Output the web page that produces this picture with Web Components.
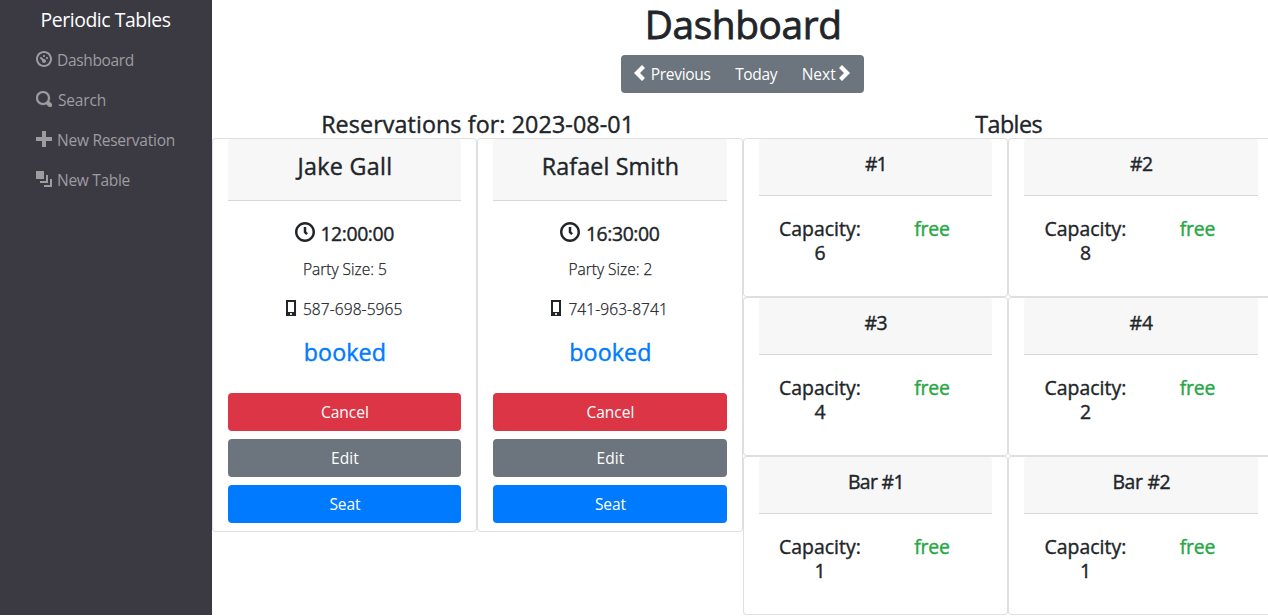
<!DOCTYPE html>
<html lang="en">
<head>
<meta charset="utf-8">
<title>Periodic Tables</title>
<style>
  html, body { margin: 0; height: 100%; overflow: hidden; background: #fff; }
  body { font: 400 16px/24px "Open Sans", "Noto Sans", sans-serif; color: #212529; }
</style>
</head>
<body>
<periodic-app></periodic-app>
<script>
const define = (name, css, html, setup) => customElements.define(name, class extends HTMLElement {
  connectedCallback() {
    if (this.shadowRoot) return;
    const root = this.attachShadow({ mode: "open" });
    root.innerHTML = `<style>*{box-sizing:border-box}${css}</style>${typeof html === "function" ? html(this) : html}`;
    if (setup) setup(this, root);
  }
});
const attr = (el, n) => el.getAttribute(n) || "";

const ICONS = {
  dashboard: "M4 0c-2.2 0-4 1.8-4 4s1.8 4 4 4 4-1.8 4-4-1.8-4-4-4zm0 1c1.66 0 3 1.34 3 3s-1.34 3-3 3-3-1.34-3-3 1.34-3 3-3zm0 1c-.28 0-.5.22-.5.5s.22.5.5.5.5-.22.5-.5-.22-.5-.5-.5zm-1.66 1a.5.5 0 0 0-.19.84l.91.91c-.02.08-.06.16-.06.25 0 .55.45 1 1 1s1-.45 1-1-.45-1-1-1c-.09 0-.17.04-.25.06l-.91-.91a.5.5 0 0 0-.44-.16.5.5 0 0 0-.06 0zm3.16 0c-.28 0-.5.22-.5.5s.22.5.5.5.5-.22.5-.5-.22-.5-.5-.5z",
  search: "M3.5 0c-1.93 0-3.5 1.57-3.5 3.5s1.57 3.5 3.5 3.5c.59 0 1.17-.14 1.66-.41a1 1 0 0 0 .13.13l1 1a1.02 1.02 0 1 0 1.44-1.44l-1-1a1 1 0 0 0-.16-.13c.27-.49.44-1.06.44-1.66 0-1.93-1.55-3.5-3.5-3.5zm0 1c1.39 0 2.5 1.11 2.5 2.5 0 .66-.24 1.27-.66 1.72-.01.01-.02.02-.03.03a1 1 0 0 0-.13.13c-.44.4-1.04.63-1.69.63-1.39 0-2.5-1.11-2.5-2.5s1.11-2.5 2.5-2.5z",
  plus: "M3 0v3h-3v2h3v3h2v-3h3v-2h-3v-3h-2z",
  layers: "M0 0v4h4v-4h-4zm5 2v3h-3v1h4v-4h-1zm2 2v3h-3v1h4v-4h-1z",
  left: "M5 0l-4 4 4 4 1.5-1.5-2.5-2.5 2.5-2.5-1.5-1.5z",
  right: "M2.5 0l-1.5 1.5 2.5 2.5-2.5 2.5 1.5 1.5 4-4-4-4z",
  clock: "M4 0c-2.2 0-4 1.8-4 4s1.8 4 4 4 4-1.8 4-4-1.8-4-4-4zm0 1c1.66 0 3 1.34 3 3s-1.34 3-3 3-3-1.34-3-3 1.34-3 3-3zm-.5 1v2.22l.16.13.5.5.34.38.72-.72-.38-.34-.34-.34v-1.81h-1z",
  phone: "M1.19 0c-.11 0-.19.08-.19.19v7.63c0 .11.08.19.19.19h4.63c.11 0 .19-.08.19-.19v-7.63c0-.11-.08-.19-.19-.19h-4.63zm.81 1h3v5h-3v-5zm1.5 5.5c.28 0 .5.22.5.5s-.22.5-.5.5-.5-.22-.5-.5.22-.5.5-.5z"
};
define("ui-icon", `:host{display:block;flex:none;width:16px;height:16px} svg{display:block;width:100%;height:100%;fill:currentColor}`,
  el => `<svg viewBox="0 0 8 8"><path d="${ICONS[attr(el, "name")]}"/></svg>`);

/* A single line of text tracked so that its advance equals the w attribute. */
define("ui-text", `:host{display:block;flex:none;white-space:nowrap;padding-left:1px} span{display:inline-block;font-size:.97em;vertical-align:top}`,
  `<span><slot></slot></span>`,
  (el, root) => {
    const w = parseFloat(attr(el, "w")), span = root.querySelector("span");
    if (!w) return;
    const n = el.textContent.length, natural = span.getBoundingClientRect().width;
    span.style.letterSpacing = (w - natural) / n + "px";
  });

define("nav-item", `:host{display:flex;align-items:center;height:40px;padding-left:36px;color:#9d9ca1} ui-icon{margin:-2px 4px 0 0} ui-icon[name=search]{stroke:currentColor;stroke-width:.15}`,
  el => `<ui-icon name="${attr(el, "icon")}"></ui-icon><ui-text w="${attr(el, "w")}" style="margin-left:${attr(el, "gap") || 0}px">${attr(el, "label")}</ui-text>`);

define("side-bar", `:host{display:block;height:615px;background:#3b3a43}
  .brand{display:flex;height:40px;align-items:center;padding-left:39.5px;font-size:20px;color:#fff}`,
  `<div class="brand"><ui-text w="130">Periodic Tables</ui-text></div>
   <nav-item icon="dashboard" w="77" label="Dashboard"></nav-item>
   <nav-item icon="search" w="48" gap="1" label="Search"></nav-item>
   <nav-item icon="plus" w="118" label="New Reservation"></nav-item>
   <nav-item icon="layers" w="73" label="New Table"></nav-item>`);

define("day-switch", `:host{display:flex;align-items:center;width:243px;height:38px;margin:0 auto;padding-left:11px;border-radius:4px;background:#6c757d;color:#fff}
  ui-icon{margin-top:-2px}`,
  `<ui-icon name="left"></ui-icon><ui-text w="60" style="margin-left:1.5px">Previous</ui-text>
   <ui-text w="42" style="margin-left:23.5px">Today</ui-text>
   <ui-text w="34" style="margin-left:23.5px">Next</ui-text><ui-icon name="right" style="margin-left:1.5px"></ui-icon>`);

define("action-button", `:host{display:flex;justify-content:center;align-items:center;height:38px;border-radius:4px;color:#fff;margin-bottom:8px}`, `<slot></slot>`);

const CARD = `:host{display:block;min-width:0;border:1px solid rgba(0,0,0,.125);border-radius:4px;padding:0 15px;background:#fff}
  header{display:flex;justify-content:center;padding-top:13px;background:#f7f7f7;border-bottom:1px solid #d8d8d8;border-radius:3px 3px 0 0;font-weight:500;-webkit-text-stroke:.4px currentColor}
  .row{display:flex;justify-content:center}`;

define("reservation-card", CARD + `:host{height:394px}
  header{height:62px;font-size:24px;line-height:29px}
  .time{margin-top:20px;align-items:center;height:24px;font-size:20px;line-height:24px;font-weight:500}
  .time ui-icon{width:20px;height:20px;margin:-2px 4.5px 0 0}
  .time ui-text{padding-top:1px;-webkit-text-stroke:.4px currentColor}
  .party{margin-top:12px;font-weight:300;-webkit-text-stroke:.25px currentColor}
  .phone{margin-top:16px;font-weight:300;align-items:center;-webkit-text-stroke:.25px currentColor}
  .phone ui-icon{margin:-2px 2px 0 -2.5px}
  .status{margin:17px 0 26px;font-size:24px;line-height:29px;font-weight:500;color:#007bff;-webkit-text-stroke:.4px currentColor}`,
  el => `<header><ui-text w="${attr(el, "namew")}">${attr(el, "name")}</ui-text></header>
    <div class="row time"><ui-icon name="clock"></ui-icon><ui-text w="73.5">${attr(el, "time")}</ui-text></div>
    <div class="row party"><ui-text w="84">Party Size: ${attr(el, "party")}</ui-text></div>
    <div class="row phone"><ui-icon name="phone"></ui-icon><ui-text w="99.5">${attr(el, "phone")}</ui-text></div>
    <div class="row status"><ui-text w="82.5">booked</ui-text></div>
    <action-button style="background:#dc3545"><ui-text w="48">Cancel</ui-text></action-button>
    <action-button style="background:#6c757d"><ui-text w="28">Edit</ui-text></action-button>
    <action-button style="background:#007bff"><ui-text w="31">Seat</ui-text></action-button>`);

define("table-card", CARD + `:host{height:159px;font-size:20px;line-height:24px;font-weight:500}
  header{height:57px}
  .body{display:grid;grid-template-columns:112px 112px;justify-content:center;margin-top:21px;-webkit-text-stroke:.4px currentColor}
  .body>div{display:flex;flex-direction:column;align-items:center}
  .free{color:#28a745}`,
  el => `<header><ui-text w="${attr(el, "namew")}">${attr(el, "name")}</ui-text></header>
    <div class="body"><div><ui-text w="82">Capacity:</ui-text><ui-text w="11">${attr(el, "capacity")}</ui-text></div>
    <div class="free"><ui-text w="35.5">free</ui-text></div></div>`);

define("card-column", `:host{display:block;width:531px}
  .title{display:flex;justify-content:center;font-size:24px;line-height:29px;height:28px;font-weight:500;-webkit-text-stroke:.4px currentColor}
  .cards{display:grid;grid-template-columns:265.5px 265.5px;align-items:start}`,
  el => `<div class="title"><ui-text w="${attr(el, "w")}">${attr(el, "heading")}</ui-text></div><div class="cards"><slot></slot></div>`);

define("periodic-app", `:host{display:grid;grid-template-columns:211.67px 1062px;width:1268px;height:616px;overflow:hidden}
  h1{display:flex;justify-content:center;margin:0 0 7px;height:48px;font-size:40px;line-height:48px;font-weight:500;-webkit-text-stroke:.8px currentColor}
  .columns{display:flex;margin-top:17px}`,
  `<side-bar></side-bar>
   <main>
     <h1><ui-text w="197">Dashboard</ui-text></h1>
     <day-switch></day-switch>
     <div class="columns">
       <card-column heading="Reservations for: 2023-08-01" w="313">
         <reservation-card name="Jake Gall" namew="95" time="12:00:00" party="5" phone="587-698-5965"></reservation-card>
         <reservation-card name="Rafael Smith" namew="137.5" time="16:30:00" party="2" phone="741-963-8741"></reservation-card>
       </card-column>
       <card-column heading="Tables" w="67">
         <table-card name="#1" namew="22" capacity="6"></table-card>
         <table-card name="#2" namew="23" capacity="8"></table-card>
         <table-card name="#3" namew="23" capacity="4"></table-card>
         <table-card name="#4" namew="24" capacity="2"></table-card>
         <table-card name="Bar #1" namew="56" capacity="1"></table-card>
         <table-card name="Bar #2" namew="58" capacity="1"></table-card>
       </card-column>
     </div>
   </main>`);
</script>
</body>
</html>
